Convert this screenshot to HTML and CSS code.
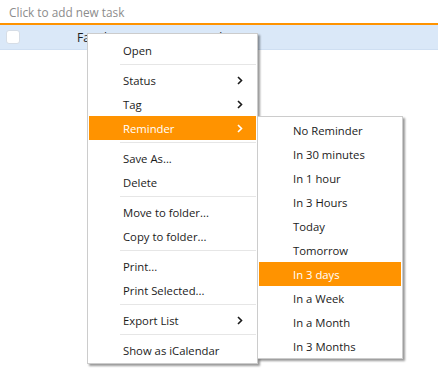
FILE: index.html
```html
<!DOCTYPE html>
<html>
<head>
<meta charset="utf-8">
<link rel="stylesheet" href="styles.css">
</head>
<body>
<div class="app">
  <div class="new-task">Click to add new task</div>
  <div class="task-row">
    <span class="check"></span>
    <span class="task-title">Family Farm BBC 4 animals</span>
  </div>

  <div class="menu main-menu">
    <div class="item">Open</div>
    <div class="sep"></div>
    <div class="item">Status<svg class="chev" width="6" height="9" viewBox="0 0 6 9"><path d="M1 1 L4.5 4.5 L1 8" fill="none" stroke="currentColor" stroke-width="1.6"/></svg></div>
    <div class="item">Tag<svg class="chev" width="6" height="9" viewBox="0 0 6 9"><path d="M1 1 L4.5 4.5 L1 8" fill="none" stroke="currentColor" stroke-width="1.6"/></svg></div>
    <div class="item active">Reminder<svg class="chev" width="6" height="9" viewBox="0 0 6 9"><path d="M1 1 L4.5 4.5 L1 8" fill="none" stroke="currentColor" stroke-width="1.6"/></svg></div>
    <div class="sep"></div>
    <div class="item">Save As...</div>
    <div class="item">Delete</div>
    <div class="sep"></div>
    <div class="item">Move to folder...</div>
    <div class="item">Copy to folder...</div>
    <div class="sep"></div>
    <div class="item">Print...</div>
    <div class="item">Print Selected...</div>
    <div class="sep"></div>
    <div class="item">Export List<svg class="chev" width="6" height="9" viewBox="0 0 6 9"><path d="M1 1 L4.5 4.5 L1 8" fill="none" stroke="currentColor" stroke-width="1.6"/></svg></div>
    <div class="sep"></div>
    <div class="item">Show as iCalendar</div>
  </div>

  <div class="menu sub-menu">
    <div class="item">No Reminder</div>
    <div class="item">In 30 minutes</div>
    <div class="item">In 1 hour</div>
    <div class="item">In 3 Hours</div>
    <div class="item">Today</div>
    <div class="item">Tomorrow</div>
    <div class="item active">In 3 days</div>
    <div class="item">In a Week</div>
    <div class="item">In a Month</div>
    <div class="item">In 3 Months</div>
  </div>
</div>
</body>
</html>
```

FILE: styles.css
```css
html, body {
  margin: 0;
  padding: 0;
  background: #ffffff;
}
body {
  font-family: "Open Sans", "Noto Sans", "Liberation Sans", sans-serif;
  font-size: 11.3px;
  color: #1b1b1b;
}
.app {
  position: relative;
  width: 438px;
  height: 384px;
  overflow: hidden;
}
.new-task {
  height: 23px;
  line-height: 25px;
  padding-left: 9px;
  font-size: 11.8px;
  color: #8c8c8c;
  border-bottom: 2px solid #ff9300;
}
.task-row {
  display: flex;
  align-items: center;
  height: 24px;
  background: #dae8f8;
  border-bottom: 1px solid #cfdff2;
}
.check {
  width: 12px;
  height: 12px;
  margin-left: 6px;
  background: #ffffff;
  border: 1px solid #d6dde6;
  border-radius: 3px;
}
.task-title {
  margin-left: 57px;
  font-size: 12px;
  color: #1b1b1b;
}
.menu {
  position: absolute;
  background: #ffffff;
  border: 1px solid #cccccc;
  box-shadow: 2px 2px 2px rgba(0, 0, 0, 0.4);
  box-sizing: border-box;
}
.main-menu {
  left: 87px;
  top: 33px;
  width: 171px;
  padding: 4px 1px 1px 1px;
}
.sub-menu {
  left: 257px;
  top: 116px;
  width: 146px;
  padding: 1px 1px 0 1px;
}
.item {
  display: flex;
  align-items: center;
  justify-content: space-between;
  height: 24px;
  padding-top: 1px;
  box-sizing: border-box;
  padding-left: 34px;
  padding-right: 13px;
  white-space: nowrap;
}
.item.active {
  background: #ff9300;
  color: #ffffff;
}
.chev {
  display: block;
}
.sep {
  height: 1px;
  margin: 2px 0 3px 31px;
  background: #e6e6e6;
}
```
